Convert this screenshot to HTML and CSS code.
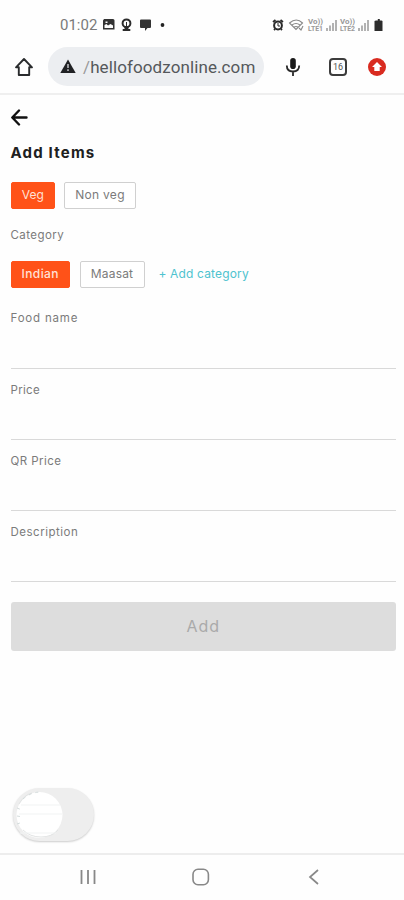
FILE: index.html
```html
<!DOCTYPE html>
<html lang="en">
<head>
<meta charset="utf-8">
<title>Add Items</title>
<link rel="stylesheet" href="styles.css">
</head>
<body>
<div class="status">
  <span class="clock">01:02</span>
  <svg class="notices" width="66" height="16" viewBox="0 0 66 16">
    <path fill="#333" fill-rule="evenodd" d="M3 2h9a1.500 1.500 0 0 1 1.500 1.500v9H2V3.500zM3.500 8v3h8.500V8.500L9.500 7 7 8.500 5.500 7zM4.500 4.500v1.500h2V4.500z"/>
    <circle cx="25.500" cy="6.300" r="3.900" fill="none" stroke="#2c2c2c" stroke-width="2"/>
    <path fill="#2c2c2c" d="M23 9h5l-.7 3h2v2h-7.600v-2h2zM25 5h1v4h-1z"/>
    <path fill="#333" d="M40 2.500h9q1 0 1 1v6.500q0 1-1 1h-2.500L44 14v-3h-4q-1 0-1-1V3.500q0-1 1-1z"/>
    <circle cx="61.500" cy="8" r="1.900" fill="#222"/>
  </svg>
  <svg class="signals" width="114" height="18" viewBox="0 0 114 18">
    <g fill="none" stroke="#292929">
      <circle cx="7" cy="9.500" r="3.900" stroke-width="2"/>
      <path stroke-width="1.800" d="M2 6l2.500-2M9.500 4L12 6M3 14l1-1M11 14l-1-1"/>
      <path stroke-width="1" d="M7 7v3h2"/>
    </g>
    <g fill="none" stroke="#888" stroke-width="1.100">
      <path d="M18.500 7q7-6 13 0l-6.500 6.500zM21 9q4-3 8 0M23 11q2-1 4 0M28 12l2 2 2-4"/>
    </g>
    <g fill="#999" class="volte">
      <text x="37" y="8" textLength="15" lengthAdjust="spacingAndGlyphs">Vo))</text>
      <text x="37" y="15" textLength="15" lengthAdjust="spacingAndGlyphs">LTE1</text>
      <text x="69" y="8" textLength="15" lengthAdjust="spacingAndGlyphs">Vo))</text>
      <text x="69" y="15" textLength="15" lengthAdjust="spacingAndGlyphs">LTE2</text>
    </g>
    <g stroke="#999" stroke-width="1.500">
      <path d="M56 15v-3M59 15V9.500M62 15V7M65 15V4M88 15v-3M91 15V9.500M94 15V7M97 15V4"/>
    </g>
    <path fill="#2c2c2c" d="M103.500 5l1.500-.5h1.800V3h2v1.500h1.700l1 .5v10h-8z"/>
  </svg>
</div>
<div class="browser">
  <svg class="home" width="20" height="20" viewBox="0 0 20 20" fill="none" stroke="#292b2d" stroke-width="1.900" stroke-linejoin="round"><path d="M2 10.300L10 2l8 8.300h-2.800V18H4.800v-7.700z"/></svg>
  <div class="address">
    <svg width="16" height="15" viewBox="0 0 16 15"><path fill="#202124" d="M8 .5L15.700 14H.3z"/><path stroke="#b9babd" stroke-width="1.600" d="M8 5v4M8 10.300v1.700"/></svg>
    <span class="url"><span class="slash">/</span>hellofoodzonline.com</span>
  </div>
  <svg class="mic" width="16" height="22" viewBox="0 0 16 22"><rect x="5.200" y="2" width="5.600" height="11" rx="2.800" fill="#191919"/><path d="M1.800 9.500q0 6 6.200 6t6.200-6M8 15.500V20" fill="none" stroke="#292929" stroke-width="1.800"/></svg>
  <span class="tabs">16</span>
  <svg class="update" width="18" height="18" viewBox="0 0 18 18"><circle cx="9" cy="9" r="9" fill="#d92b20"/><path fill="#fff" d="M9 4l5 5h-2.300v4H6.300V9H4z"/></svg>
</div>
<main>
  <svg class="back" width="17" height="17" viewBox="0 0 17 17" fill="none" stroke="#111" stroke-width="2.400" stroke-linecap="round" stroke-linejoin="round"><path d="M8 1.500l-6.700 7 6.700 7M2 8.500h13.500"/></svg>
  <h1>Add Items</h1>
  <div class="chips">
    <span class="chip on veg">Veg</span>
    <span class="chip nonveg">Non veg</span>
  </div>
  <div class="label category">Category</div>
  <div class="chips second">
    <span class="chip on indian">Indian</span>
    <span class="chip maasat">Maasat</span>
    <span class="add-category">+ Add category</span>
  </div>
  <div class="field"><span class="label food">Food name</span></div>
  <div class="field"><span class="label price">Price</span></div>
  <div class="field"><span class="label qr">QR Price</span></div>
  <div class="field"><span class="label desc">Description</span></div>
  <div class="submit">Add</div>
  <div class="toggle"><svg width="82" height="54" viewBox="0 0 82 54" fill="none"><circle cx="26.500" cy="27" r="23" fill="#fff"/><path stroke="#e2e4e4" d="M6 16q5-9 13-11M10 42q7 7 18 7 11 0 17-7"/><path stroke="#f1f3f3" d="M8 17h39M6 26h43M7 45h36"/><path stroke="#d4dcdc" stroke-dasharray="3 4" d="M10 11q8-7 18-7M4 20l5 2M4 28l6 1M4 36l6-2"/></svg></div>
</main>
<div class="nav">
  <svg width="18" height="18" viewBox="0 0 18 18" stroke="#888" stroke-width="1.800"><path d="M2.500 2v14M9 2v14M15.500 2v14"/></svg>
  <svg width="18" height="18" viewBox="0 0 18 18" fill="none" stroke="#888" stroke-width="1.600"><rect x="1" y="1.300" width="15.400" height="15.400" rx="5"/></svg>
  <svg width="18" height="18" viewBox="0 0 18 18" fill="none" stroke="#888" stroke-width="1.700"><path d="M13 2L5 9l8 7"/></svg>
</div>
</body>
</html>
```
FILE: styles.css
```css
* { box-sizing: border-box; }
body { margin: 0; width: 404px; height: 900px; overflow: hidden; display: flex; flex-direction: column; background: #fefefe; font-family: Inter, sans-serif; color: #7b7b7b; }
svg { display: block; flex: none; }
.status { height: 40px; flex: none; display: flex; align-items: center; padding: 10px 0 0 60px; }
.clock { width: 41px; font: 15px Roboto, sans-serif; color: #7a7a7a; letter-spacing: 0; white-space: nowrap; }
.signals { margin-left: 104px; }
.volte { font: bold 7px Roboto, sans-serif; }
.browser { height: 55px; flex: none; display: flex; align-items: center; border-bottom: 2px solid #efefef; padding-left: 14px; }
.address { width: 216px; height: 39px; border-radius: 20px; background: #eceef1; margin-left: 14px; display: flex; align-items: center; padding-left: 12px; }
.url { margin-left: 7px; font: 17px Roboto, sans-serif; color: #55585b; letter-spacing: .1px; white-space: nowrap; }
.slash { color: #999; }
.mic { margin-left: 21px; }
.tabs { width: 18px; height: 18px; margin-left: 28px; border: 2px solid #3c3c3c; border-radius: 4px; font: 9px/14px Roboto, sans-serif; text-align: center; color: #555; }
.update { margin-left: 21px; }
main { flex: 1; padding: 0 8px 0 10.5px; display: flex; flex-direction: column; align-items: flex-start; }
.back { margin-top: 14px; }
h1 { margin: 17px 0 0; font-size: 15px; line-height: 20px; font-weight: 700; color: #202020; letter-spacing: 1.200px; white-space: nowrap; }
.chips { display: flex; height: 27px; margin-top: 19px; }
.chip { height: 27px; border: 1px solid #d0d0d0; border-radius: 2px; font-size: 12px; line-height: 24px; text-align: center; background: #fff; white-space: nowrap; }
.chip.on { background: #ff5218; border-color: #ff5218; color: #ffe1d6; }
.veg { width: 44.5px; }
.nonveg { width: 72px; margin-left: 9px; letter-spacing: .3px; }
.label { font-size: 11.5px; line-height: 16px; white-space: nowrap; }
.category { margin-top: 18px; letter-spacing: .45px; }
.second { margin-top: 18px; }
.indian { width: 59.5px; letter-spacing: .4px; font-weight: 500; }
.maasat { width: 65px; margin-left: 9.5px; letter-spacing: .2px; }
.add-category { margin-left: 14px; font-size: 12px; line-height: 26px; color: #4ec3cf; letter-spacing: .15px; white-space: nowrap; }
.field { width: 100%; height: 71px; border-bottom: 1px solid #d9d9d9; padding-top: 13px; flex: none; }
.second + .field { height: 81px; padding-top: 22px; }
.field .label { display: block; }
.food { letter-spacing: .8px; }
.price { letter-spacing: .3px; }
.qr { letter-spacing: .45px; }
.desc { letter-spacing: .5px; }
.submit { width: 100%; height: 49px; margin-top: 20px; background: #ddd; border-radius: 3px; font-size: 16px; line-height: 48px; text-align: center; color: #aaa; letter-spacing: .9px; }
.toggle { width: 81px; height: 53px; margin: 137px 0 0 2px; border-radius: 27px; background: #eee; box-shadow: 0 1px 2px #ccc; }
.nav { height: 47px; flex: none; border-top: 2px solid #ededed; display: flex; align-items: center; justify-content: space-between; padding: 0 81px 1px 79px; }
```
